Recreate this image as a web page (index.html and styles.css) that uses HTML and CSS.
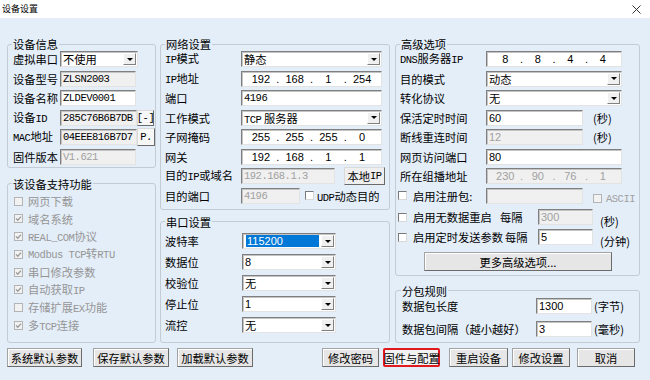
FILE: index.html
```html
<!DOCTYPE html>
<html lang="zh-CN">
<head>
<meta charset="utf-8">
<title>设备设置</title>
<link rel="stylesheet" href="styles.css">
</head>
<body>
<div class="titlebar">
  <span class="title">设备设置</span>
  <svg class="close" width="9" height="9" viewBox="0 0 9 9"><path d="M0.5 0.5L8.5 8.5M8.5 0.5L0.5 8.5" stroke="#333" stroke-width="1" fill="none"/></svg>
</div>
<div class="main">
  <div class="cols">
    <div class="col col1">
      <fieldset class="grp dev">
        <legend>设备信息</legend>
        <div class="rows">
          <div class="row"><span class="lbl">虚拟串口</span><div class="combo w78"><span class="cv">不使用</span><span class="arr"></span></div></div>
          <div class="row"><span class="lbl">设备型号</span><div class="in ro w76 m">ZLSN2003</div></div>
          <div class="row"><span class="lbl">设备名称</span><div class="in w76 m">ZLDEV0001</div></div>
          <div class="row"><span class="lbl">设备<span class="m">ID</span></span><div class="in ro w77 m">285C76B6B7DB</div><span class="sbtn m">[-]</span></div>
          <div class="row"><span class="lbl"><span class="m">MAC</span>地址</span><div class="in ro w77 m">04EEE816B7D7</div><span class="sbtn tall m">P.</span></div>
          <div class="row"><span class="lbl">固件版本</span><div class="in dis w76 m">V1.621</div></div>
        </div>
      </fieldset>
      <fieldset class="grp func fill">
        <legend>该设备支持功能</legend>
        <div class="rows">
          <div class="row chk"><span class="cb dis"></span><span class="ct">网页下载</span></div>
          <div class="row chk"><span class="cb dis"><svg viewBox="0 0 7 7"><path d="M1 3.4L2.8 5.3L6 1.6" fill="none" stroke="#9a9a9a" stroke-width="1.3"/></svg></span><span class="ct">域名系统</span></div>
          <div class="row chk"><span class="cb dis"><svg viewBox="0 0 7 7"><path d="M1 3.4L2.8 5.3L6 1.6" fill="none" stroke="#9a9a9a" stroke-width="1.3"/></svg></span><span class="ct"><span class="m">REAL_COM</span>协议</span></div>
          <div class="row chk"><span class="cb dis"><svg viewBox="0 0 7 7"><path d="M1 3.4L2.8 5.3L6 1.6" fill="none" stroke="#9a9a9a" stroke-width="1.3"/></svg></span><span class="ct"><span class="m">Modbus TCP</span>转<span class="m">RTU</span></span></div>
          <div class="row chk"><span class="cb dis"><svg viewBox="0 0 7 7"><path d="M1 3.4L2.8 5.3L6 1.6" fill="none" stroke="#9a9a9a" stroke-width="1.3"/></svg></span><span class="ct">串口修改参数</span></div>
          <div class="row chk"><span class="cb dis"><svg viewBox="0 0 7 7"><path d="M1 3.4L2.8 5.3L6 1.6" fill="none" stroke="#9a9a9a" stroke-width="1.3"/></svg></span><span class="ct">自动获取<span class="m">IP</span></span></div>
          <div class="row chk"><span class="cb dis"></span><span class="ct">存储扩展<span class="m">EX</span>功能</span></div>
          <div class="row chk"><span class="cb dis"><svg viewBox="0 0 7 7"><path d="M1 3.4L2.8 5.3L6 1.6" fill="none" stroke="#9a9a9a" stroke-width="1.3"/></svg></span><span class="ct">多<span class="m">TCP</span>连接</span></div>
        </div>
      </fieldset>
    </div>

    <div class="col col2">
      <fieldset class="grp net">
        <legend>网络设置</legend>
        <div class="rows">
          <div class="row"><span class="lbl"><span class="m">IP</span>模式</span><div class="combo w141"><span class="cv">静态</span><span class="arr"></span></div></div>
          <div class="row"><span class="lbl"><span class="m">IP</span>地址</span><div class="in ip w141"><span>192</span><i>.</i><span>168</span><i>.</i><span>1</span><i>.</i><span>254</span></div></div>
          <div class="row"><span class="lbl">端口</span><div class="in w141 m">4196</div></div>
          <div class="row"><span class="lbl">工作模式</span><div class="combo w141"><span class="cv"><span class="m">TCP</span> 服务器</span><span class="arr"></span></div></div>
          <div class="row"><span class="lbl">子网掩码</span><div class="in ip w141"><span>255</span><i>.</i><span>255</span><i>.</i><span>255</span><i>.</i><span>0</span></div></div>
          <div class="row"><span class="lbl">网关</span><div class="in ip w141"><span>192</span><i>.</i><span>168</span><i>.</i><span>1</span><i>.</i><span>1</span></div></div>
          <div class="row"><span class="lbl">目的<span class="m">IP</span>或域名</span><div class="in dis w94 m">192.168.1.3</div><span class="lbtn">本地<span class="m">IP</span></span></div>
          <div class="row"><span class="lbl">目的端口</span><div class="in dis w59 m">4196</div><span class="cb udp"></span><span class="udpt"><span class="m">UDP</span>动态目的</span></div>
        </div>
      </fieldset>
      <fieldset class="grp ser fill">
        <legend>串口设置</legend>
        <div class="rows">
          <div class="row"><span class="lbl">波特率</span><div class="combo w94"><span class="cv sel n">115200</span><span class="arr"></span></div></div>
          <div class="row"><span class="lbl">数据位</span><div class="combo w94"><span class="cv n">8</span><span class="arr"></span></div></div>
          <div class="row"><span class="lbl">校验位</span><div class="combo w94"><span class="cv">无</span><span class="arr"></span></div></div>
          <div class="row"><span class="lbl">停止位</span><div class="combo w94"><span class="cv n">1</span><span class="arr"></span></div></div>
          <div class="row"><span class="lbl">流控</span><div class="combo w94"><span class="cv">无</span><span class="arr"></span></div></div>
        </div>
      </fieldset>
    </div>

    <div class="col col3">
      <fieldset class="grp adv">
        <legend>高级选项</legend>
        <div class="rows">
          <div class="row"><span class="lbl"><span class="m">DNS</span>服务器<span class="m">IP</span></span><div class="in ip w136"><span>8</span><i>.</i><span>8</span><i>.</i><span>4</span><i>.</i><span>4</span></div></div>
          <div class="row"><span class="lbl">目的模式</span><div class="combo w136"><span class="cv">动态</span><span class="arr"></span></div></div>
          <div class="row"><span class="lbl">转化协议</span><div class="combo w136"><span class="cv">无</span><span class="arr"></span></div></div>
          <div class="row"><span class="lbl">保活定时时间</span><div class="in w97 n">60</div><span class="unit">(秒)</span></div>
          <div class="row"><span class="lbl">断线重连时间</span><div class="in dis w97 n">12</div><span class="unit">(秒)</span></div>
          <div class="row"><span class="lbl">网页访问端口</span><div class="in w136 n">80</div></div>
          <div class="row"><span class="lbl">所在组播地址</span><div class="in ip dis w136"><span>230</span><i>.</i><span>90</span><i>.</i><span>76</span><i>.</i><span>1</span></div></div>
          <div class="row"><span class="cb opt"></span><span class="olbl">启用注册包:</span><div class="in dis w97"></div><span class="ascii"><span class="cb dis"></span><span class="m">ASCII</span></span></div>
          <div class="row r9"><span class="cb opt"></span><span class="olbl o9">启用无数据重启</span><span class="every e9">每隔</span><div class="in dis w55 n">300</div><span class="unit low">(秒)</span></div>
          <div class="row r10"><span class="cb opt"></span><span class="olbl o10">启用定时发送参数</span><span class="every e10">每隔</span><div class="in w55 n">5</div><span class="unit low">(分钟)</span></div>
          <div class="btn more">更多高级选项...</div>
        </div>
      </fieldset>
      <fieldset class="grp pkt fill">
        <legend>分包规则</legend>
        <div class="rows">
          <div class="row"><span class="lbl">数据包长度</span><div class="in w56 n">1300</div><span class="punit">(字节)</span></div>
          <div class="row"><span class="lbl">数据包间隔（越小越好）</span><div class="in w56 n">3</div><span class="punit">(毫秒)</span></div>
        </div>
      </fieldset>
    </div>
  </div>

  <div class="footer">
    <div class="btn fb1">系统默认参数</div>
    <div class="btn fb2">保存默认参数</div>
    <div class="btn fb3">加载默认参数</div>
    <div class="btn fb4">修改密码</div>
    <div class="btn fb5 hl">固件与配置</div>
    <div class="btn fb6">重启设备</div>
    <div class="btn fb7">修改设置</div>
    <div class="btn fb8">取消</div>
  </div>
</div>
</body>
</html>
```

FILE: styles.css
```css
* { box-sizing: border-box; }
html, body { margin: 0; padding: 0; }
body {
  width: 650px;
  height: 380px;
  overflow: hidden;
  background: #e4eef9;
  font-family: "Noto Sans CJK SC", "Noto Sans", sans-serif;
  font-size: 11.25px;
  color: #000;
}

.titlebar {
  height: 18px;
  background: #fff;
  display: flex;
  align-items: center;
  justify-content: space-between;
  padding: 0 9px 0 2px;
}
.title { font-size: 9px; line-height: 12px; }
.close { display: block; }

.main { padding: 19px 10px 0 7px; }
.cols { display: flex; height: 306px; }
.col { display: flex; flex-direction: column; }
.col1 { width: 149px; }
.col2 { width: 230px; margin-left: 4px; }
.col3 { width: 245px; margin-left: 5px; }

.grp {
  margin: 0;
  min-width: 0;
  border: 1px solid #c3cbd4;
  border-radius: 3px;
  padding: 0 4px;
}
.grp legend { padding: 0 1px; line-height: 14px; }
.fill { flex: 1; }

.rows { display: flex; flex-direction: column; }
.row { display: flex; align-items: center; height: 16px; flex: none; white-space: nowrap; }
.lbl { flex: none; line-height: 14px; }

.m { font-family: "Liberation Mono", monospace; font-size: 10.5px; letter-spacing: -0.5px; }
.n { font-family: "Liberation Sans", Arial, sans-serif; font-size: 11px; }

/* column 1 */
.col1 .grp { padding: 0 5px; }
.col1 .grp legend { margin-left: -1px; }
.col1 .lbl { width: 47px; }
.dev { padding-bottom: 2.5px !important; }
.dev .rows { gap: 3.5px; }
.func { margin-top: 8.5px; }
.func .rows { padding-top: 2.5px; gap: 1.8px; }
.chk { color: #959595; }
.chk .cb { margin-left: 1px; }
.ct { margin-left: 5px; line-height: 14px; }

/* column 2 */
.col2 .lbl { width: 76px; }
.net { padding-bottom: 5px; }
.net .rows { gap: 3.5px; }
.ser { margin-top: 5px; }
.ser .rows { padding-top: 4.5px; gap: 5px; }
.ser .lbl { width: 77px; }
.udp { margin-left: 5px; }
.udpt { margin-left: 3px; }

/* column 3 */
.col3 .lbl { width: 86px; }
.adv { padding-bottom: 4px; }
.adv .rows { gap: 3.5px; }
.adv .r9 { margin-top: 2px; }
.adv .r10 { margin-top: 0.5px; }
.unit { margin-left: 10px; }
.unit.low { margin-left: 7px; margin-top: 8px; }
.opt { margin-left: -2px; }
.olbl { margin-left: 6px; width: 73px; }
.o9 { width: 87px; }
.o10 { width: 92px; }
.every.e9 { width: 38px; }
.every.e10 { width: 33px; }
.ascii { display: flex; align-items: center; margin-left: 10px; margin-top: 6px; color: #a0a0a0; }
.ascii .cb { margin-right: 4px; }
.more { width: 188px; height: 15px; margin: 3.5px 0 0 24px; flex: none; }
.pkt { margin-top: 7.5px; padding: 0 6px; }
.pkt legend { margin-left: -1px; }
.pkt .rows { padding-top: 0.5px; gap: 7px; }
.pkt .lbl { width: 134px; }
.punit { margin-left: 2px; }

/* controls */
.in {
  height: 16px;
  border: 1px solid;
  border-color: #7f7f7f #e3e3e3 #e3e3e3 #7f7f7f;
  box-shadow: inset 1px 1px 0 #c4c4c4;
  background: #fff;
  padding: 0 2px;
  display: flex;
  align-items: center;
  white-space: nowrap;
  line-height: 14px;
  flex: none;
}
.ro { background: #f0f0f0; }
.dis { background: #f0f0f0; color: #a0a0a0; }
.ip {
  display: grid;
  grid-template-columns: 1fr 4px 1fr 4px 1fr 4px 1fr;
  text-align: center;
  font-family: "Liberation Sans", Arial, sans-serif;
  font-size: 11px;
  padding: 0 4px;
}
.ip i { font-style: normal; }

.combo {
  height: 16px;
  display: flex;
  align-items: center;
  border: 1px solid;
  border-color: #7f7f7f #e3e3e3 #e3e3e3 #7f7f7f;
  box-shadow: inset 1px 1px 0 #c4c4c4;
  background: #fff;
  padding: 1px;
  flex: none;
}
.cv { flex: 1; height: 12px; line-height: 12px; padding-left: 1px; white-space: nowrap; }
.cv.sel { background: #0078d7; color: #fff; margin: 0 2px 0 2px; }
.arr {
  width: 13px;
  height: 12px;
  flex: none;
  background: #f0f0f0;
  border: 1px solid;
  border-color: #fff #808080 #808080 #fff;
  display: flex;
  align-items: center;
  justify-content: center;
}
.arr::after {
  content: "";
  border-left: 3px solid transparent;
  border-right: 3px solid transparent;
  border-top: 3px solid #000;
}

.w55 { width: 55px; }
.w56 { width: 56px; }
.w59 { width: 59px; }
.w76 { width: 76px; }
.w77 { width: 77px; }
.w78 { width: 78px; }
.w94 { width: 94px; }
.w97 { width: 97px; }
.w136 { width: 136px; }
.w141 { width: 141px; }

.sbtn, .lbtn {
  height: 16px;
  width: 17px;
  border: 1px solid;
  border-color: #dadada #6a6a6a #6a6a6a #dadada;
  background: #f7f7f7;
  display: flex;
  align-items: center;
  justify-content: center;
  flex: none;
}
.sbtn.tall { height: 18px; width: 18px; }
.lbtn { width: 41px; height: 18px; margin-left: 9px; background: #efefef; }

.cb {
  width: 9px;
  height: 9px;
  border: 1px solid;
  border-color: #7a7a7a #d8d8d8 #d8d8d8 #7a7a7a;
  background: #fff;
  flex: none;
  display: flex;
  align-items: center;
  justify-content: center;
}
.cb.dis { border-color: #b4b4b4; background: #f2f2f2; }
.cb svg { width: 7px; height: 7px; display: block; }

.btn {
  height: 19px;
  border: 1px solid;
  border-color: #a3a3a3 #6b6b6b #6b6b6b #a3a3a3;
  background: #e6e6e6;
  box-shadow: inset 1px 1px 0 #fff;
  display: flex;
  align-items: center;
  justify-content: center;
  white-space: nowrap;
  line-height: 14px;
  flex: none;
}

.footer { display: flex; margin-top: 5px; }
.fb1 { width: 75px; }
.fb2 { width: 76px; margin-left: 11px; }
.fb3 { width: 76px; margin-left: 8px; }
.fb4 { width: 57px; margin-left: 69px; }
.fb5 { width: 57px; margin-left: 4px; }
.fb6 { width: 59px; margin-left: 9px; }
.fb7 { width: 58px; margin-left: 4px; }
.fb8 { width: 58px; margin-left: 7px; }
.hl { border: 2px solid #e2191c; border-radius: 2px; box-shadow: none; background: #f2f2f2; }
```
